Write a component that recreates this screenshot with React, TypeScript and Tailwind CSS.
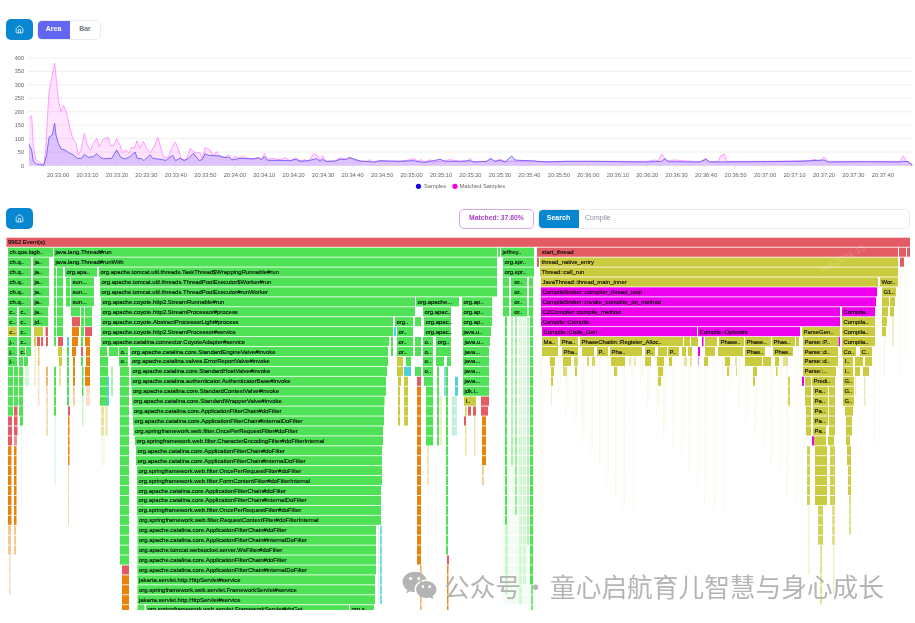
import React from 'react';
import { House } from 'lucide-react';
import { RiWechatFill } from 'react-icons/ri';

const COLORS: Record<string, string> = {
  G: '#4fe256',
  R: '#e35c64',
  O: '#cbcb3f',
  M: '#ee00ee',
  A: '#e8830c',
  C: '#50d0da',
};

// row, x start, x end, colour, label
type Frame = [number, number, number, string, string?];
// x, width, first row, last row, colour, opacity
type Strip = [number, number, number, number, string, number?];

const frames: Frame[] = [
  [0, 6.5, 910, 'R', '9962 Event(s)'],
  [1, 8, 53, 'G', 'ch.qos.logb..'],
  [1, 54, 497, 'G', 'java.lang.Thread#run'],
  [1, 498, 500, 'G'],
  [1, 501, 534, 'G', 'jeffrey..'],
  [1, 537, 898, 'R', '  start_thread'],
  [1, 899, 906, 'R'],
  [1, 907, 910, 'R'],
  [2, 8, 31, 'G', 'ch.q..'],
  [2, 33, 49, 'G', 'ja..'],
  [2, 54, 497, 'G', 'java.lang.Thread#runWith'],
  [2, 503, 534, 'G', 'org.spr..'],
  [2, 537, 539, 'R'],
  [2, 540, 898, 'O', 'thread_native_entry'],
  [2, 900, 904, 'R'],
  [3, 8, 31, 'G', 'ch.q..'],
  [3, 33, 49, 'G', 'ja..'],
  [3, 54, 56, 'G'],
  [3, 57, 63, 'G'],
  [3, 65, 97, 'G', 'org.apa..'],
  [3, 99, 497, 'G', 'org.apache.tomcat.util.threads.TaskThread$WrappingRunnable#run'],
  [3, 503, 534, 'G', 'org.spr..'],
  [3, 540, 898, 'O', 'Thread::call_run'],
  [4, 8, 31, 'G', 'ch.q..'],
  [4, 33, 49, 'G', 'ja..'],
  [4, 54, 56, 'G'],
  [4, 57, 63, 'G'],
  [4, 66, 70, 'G'],
  [4, 71, 94, 'G', 'sun...'],
  [4, 100, 497, 'G', 'org.apache.tomcat.util.threads.ThreadPoolExecutor$Worker#run'],
  [4, 503, 509, 'G'],
  [4, 511, 527, 'G', ' or..'],
  [4, 529, 533, 'G'],
  [4, 541, 878, 'O', 'JavaThread::thread_main_inner'],
  [4, 880, 898, 'O', 'Wor..'],
  [5, 8, 31, 'G', 'ch.q..'],
  [5, 33, 49, 'G', 'ja..'],
  [5, 54, 56, 'G'],
  [5, 57, 63, 'G'],
  [5, 66, 70, 'G'],
  [5, 71, 94, 'G', 'sun...'],
  [5, 100, 497, 'G', 'org.apache.tomcat.util.threads.ThreadPoolExecutor#runWorker'],
  [5, 503, 509, 'G'],
  [5, 511, 527, 'G', ' or..'],
  [5, 529, 533, 'G'],
  [5, 541, 877, 'M', 'CompileBroker::compiler_thread_loop'],
  [5, 882, 896, 'O', 'G1..'],
  [6, 8, 31, 'G', 'ch.q..'],
  [6, 33, 49, 'G', 'ja..'],
  [6, 54, 56, 'G'],
  [6, 57, 63, 'G'],
  [6, 66, 70, 'G'],
  [6, 71, 94, 'G', 'sun...'],
  [6, 101, 415, 'G', 'org.apache.coyote.http2.StreamRunnable#run'],
  [6, 416, 459, 'G', 'org.apache...'],
  [6, 462, 492, 'G', 'org.ap..'],
  [6, 503, 509, 'G'],
  [6, 511, 527, 'G', ' or..'],
  [6, 529, 533, 'G'],
  [6, 541, 876, 'M', 'CompileBroker::invoke_compiler_on_method'],
  [6, 882, 889, 'O'],
  [6, 890, 895, 'O'],
  [7, 8, 17, 'G', 'c..'],
  [7, 19, 31, 'G', 'c..'],
  [7, 33, 48, 'G', 'ja..'],
  [7, 54, 56, 'G'],
  [7, 57, 63, 'G'],
  [7, 71, 80, 'G'],
  [7, 81, 84, 'G'],
  [7, 85, 92, 'G'],
  [7, 101, 415, 'G', 'org.apache.coyote.http2.StreamProcessor#process'],
  [7, 423, 451, 'G', 'org.apac..'],
  [7, 462, 492, 'G', 'org.ap..'],
  [7, 503, 509, 'G'],
  [7, 511, 527, 'G', ' or..'],
  [7, 529, 533, 'G'],
  [7, 541, 840, 'M', 'C2Compiler::compile_method'],
  [7, 842, 875, 'M', 'Compila..'],
  [7, 882, 888, 'O'],
  [7, 890, 894, 'O'],
  [8, 8, 17, 'G', 'c..'],
  [8, 19, 31, 'G', 'c..'],
  [8, 33, 48, 'G', 'jd..'],
  [8, 54, 56, 'G'],
  [8, 57, 63, 'G'],
  [8, 72, 80, 'R'],
  [8, 81, 84, 'G'],
  [8, 85, 92, 'G'],
  [8, 101, 393, 'G', 'org.apache.coyote.AbstractProcessorLight#process'],
  [8, 395, 413, 'G', 'org..'],
  [8, 415, 421, 'G'],
  [8, 424, 451, 'G', 'org.apac..'],
  [8, 462, 492, 'G', 'org.ap..'],
  [8, 541, 840, 'M', 'Compile::Compile'],
  [8, 842, 875, 'O', 'Compila..'],
  [8, 882, 887, 'O'],
  [9, 8, 17, 'O', 'c..'],
  [9, 19, 31, 'G', 'c..'],
  [9, 34, 43, 'O'],
  [9, 45.5, 48, 'R'],
  [9, 54, 56, 'G'],
  [9, 57, 63, 'G'],
  [9, 72, 79, 'A'],
  [9, 81, 84, 'G'],
  [9, 85, 92, 'R'],
  [9, 101, 393, 'G', 'org.apache.coyote.http2.StreamProcessor#service'],
  [9, 394, 396, 'C'],
  [9, 397, 413, 'G', 'or..'],
  [9, 424, 451, 'G', 'org.apac..'],
  [9, 462, 491, 'G', 'java.u..'],
  [9, 542, 697, 'M', 'Compile::Code_Gen'],
  [9, 698, 800, 'M', 'Compile::Optimize'],
  [9, 802, 840, 'O', 'ParseGen..'],
  [9, 842, 875, 'O', 'Compila..'],
  [9, 882, 886, 'O'],
  [10, 8, 17, 'G', 'j..'],
  [10, 19, 31, 'G', 'c..'],
  [10, 34, 36, 'O'],
  [10, 37, 40, 'R'],
  [10, 41, 43, 'R'],
  [10, 46, 48, 'R'],
  [10, 54, 56, 'G'],
  [10, 58, 63, 'R'],
  [10, 67, 69, 'C'],
  [10, 72, 78, 'A'],
  [10, 81, 83, 'G'],
  [10, 85, 90, 'A'],
  [10, 101, 389, 'G', 'org.apache.catalina.connector.CoyoteAdapter#service'],
  [10, 391, 393, 'G'],
  [10, 397, 413, 'G', 'or..'],
  [10, 415, 421, 'G'],
  [10, 423, 433, 'G', 'o..'],
  [10, 436, 451, 'G', 'org..'],
  [10, 463, 490, 'G', 'java.u..'],
  [10, 542, 558, 'O', 'Ma..'],
  [10, 560, 578, 'O', 'Pha..'],
  [10, 580, 683, 'O', 'PhaseChaitin::Register_Alloc..'],
  [10, 684, 690, 'O'],
  [10, 691, 698, 'O'],
  [10, 702, 703.5, 'M'],
  [10, 705, 717, 'O'],
  [10, 719, 744, 'O', 'Phase..'],
  [10, 745, 771, 'O', 'Phase..'],
  [10, 772, 795, 'O', 'Phas..'],
  [10, 796, 799, 'O'],
  [10, 803, 838, 'O', 'Parse::P..'],
  [10, 838.5, 840, 'M'],
  [10, 842, 875, 'O', 'Compila..'],
  [11, 8, 17, 'G', 'j..'],
  [11, 19, 25, 'G', 'c..'],
  [11, 26, 31, 'G'],
  [11, 58, 62, 'O'],
  [11, 67, 69, 'G'],
  [11, 72, 76, 'A'],
  [11, 81, 83, 'R'],
  [11, 86, 90, 'A'],
  [11, 100, 107, 'G'],
  [11, 109, 118, 'G'],
  [11, 119, 128, 'G', 'o..'],
  [11, 391, 393, 'G'],
  [11, 397, 413, 'G', 'or..'],
  [11, 415, 421, 'G'],
  [11, 423, 433, 'G', 'o..'],
  [11, 436, 451, 'G'],
  [11, 463, 489, 'G', 'java...'],
  [11, 542, 549, 'O'],
  [11, 549, 558, 'O'],
  [11, 562, 578, 'O', 'Pha..'],
  [11, 582, 594, 'O'],
  [11, 597, 608, 'O', 'P..'],
  [11, 610, 642, 'O', 'Pha..'],
  [11, 645, 655, 'O', 'P..'],
  [11, 658, 667, 'O'],
  [11, 668, 679, 'O', 'P..'],
  [11, 682, 686, 'O'],
  [11, 688, 692, 'O'],
  [11, 698, 700, 'M'],
  [11, 705, 715, 'O'],
  [11, 718, 743, 'O'],
  [11, 745, 765, 'O', 'Phas..'],
  [11, 773, 793, 'O', 'Phas..'],
  [11, 803, 838, 'O', 'Parse::d..'],
  [11, 842, 856, 'O', 'Co..'],
  [11, 860, 872, 'O', 'C..'],
  [12, 8, 17, 'G', 'j..'],
  [12, 19, 23, 'G'],
  [12, 24, 28, 'G'],
  [12, 59, 62, 'O'],
  [12, 67, 69, 'G'],
  [12, 73, 75, 'A'],
  [12, 81, 83, 'G'],
  [12, 86, 90, 'A'],
  [12, 100, 108, 'G'],
  [12, 119, 128, 'G', 'o..'],
  [12, 397, 403, 'O'],
  [12, 406, 411, 'G'],
  [12, 423, 433, 'G', 'o..'],
  [12, 436, 444, 'G'],
  [12, 447, 451, 'G'],
  [12, 463, 489, 'G', 'java...'],
  [12, 803, 838, 'O', 'Parse::d..'],
  [12, 843, 853, 'O', 'I..'],
  [12, 855, 863, 'O'],
  [12, 865, 872, 'O'],
  [13, 397, 403, 'O'],
  [13, 404, 411, 'C'],
  [13, 415, 421, 'G'],
  [13, 423, 433, 'G', 'o..'],
  [13, 463, 489, 'G', 'java...'],
  [13, 803, 836, 'O', 'Parse::..'],
  [13, 843, 853, 'O', 'I..'],
  [13, 855, 860, 'O'],
  [13, 863, 869, 'O'],
  [14, 398, 401, 'O'],
  [14, 404, 408, 'O'],
  [14, 417, 421, 'R'],
  [14, 424, 433, 'G'],
  [14, 463, 489, 'G', 'java...'],
  [14, 802, 804, 'M'],
  [14, 805, 811, 'O'],
  [14, 812, 835, 'O', 'Predi..'],
  [14, 843, 854, 'O', 'G..'],
  [15, 463, 489, 'G', 'jdk.i..'],
  [15, 805, 811, 'O'],
  [15, 813, 828, 'O', 'Pa..'],
  [15, 829, 835, 'O'],
  [15, 843, 854, 'O', 'G..'],
  [16, 464, 476, 'O', 'I..'],
  [16, 481, 489, 'R'],
  [16, 805, 811, 'O'],
  [16, 813, 828, 'O', 'Pa..'],
  [16, 829, 835, 'O'],
  [16, 843, 854, 'O', 'G..'],
  [17, 468, 471, 'R'],
  [17, 473, 476, 'R'],
  [17, 481, 488, 'R'],
  [17, 806, 811, 'O'],
  [17, 813, 828, 'O', 'Pa..'],
  [17, 829, 835, 'O'],
  [17, 845, 853, 'O'],
  [18, 464, 466, 'R'],
  [18, 806, 811, 'O'],
  [18, 813, 828, 'O', 'Pa..'],
  [18, 829, 835, 'O'],
  [18, 846, 852, 'O'],
  [19, 806, 811, 'O'],
  [19, 813, 826, 'O', 'Pa..'],
  [19, 829, 835, 'O'],
  [19, 846, 852, 'O'],
  [20, 812, 814, 'M'],
  [20, 814, 826, 'O'],
  [20, 828, 834, 'O'],
  [20, 846, 850, 'O'],
];

// the long servlet stack: label, left, right
const stack: [number, string, number, number][] = [
  [11, 'org.apache.catalina.core.StandardEngineValve#invoke', 130, 388],
  [12, 'org.apache.catalina.valves.ErrorReportValve#invoke', 130.5, 388],
  [13, 'org.apache.catalina.core.StandardHostValve#invoke', 131, 387],
  [14, 'org.apache.catalina.authenticator.AuthenticatorBase#invoke', 131, 386],
  [15, 'org.apache.catalina.core.StandardContextValve#invoke', 131.5, 386],
  [16, 'org.apache.catalina.core.StandardWrapperValve#invoke', 132, 384.5],
  [17, 'org.apache.catalina.core.ApplicationFilterChain#doFilter', 132.5, 384],
  [18, 'org.apache.catalina.core.ApplicationFilterChain#internalDoFilter', 133, 384],
  [19, 'org.springframework.web.filter.OncePerRequestFilter#doFilter', 133.5, 383],
  [20, 'org.springframework.web.filter.CharacterEncodingFilter#doFilterInternal', 135, 383],
  [21, 'org.apache.catalina.core.ApplicationFilterChain#doFilter', 136, 382],
  [22, 'org.apache.catalina.core.ApplicationFilterChain#internalDoFilter', 136, 382],
  [23, 'org.springframework.web.filter.OncePerRequestFilter#doFilter', 137, 382],
  [24, 'org.springframework.web.filter.FormContentFilter#doFilterInternal', 137, 382],
  [25, 'org.apache.catalina.core.ApplicationFilterChain#doFilter', 137, 381],
  [26, 'org.apache.catalina.core.ApplicationFilterChain#internalDoFilter', 137, 381],
  [27, 'org.springframework.web.filter.OncePerRequestFilter#doFilter', 137, 381],
  [28, 'org.springframework.web.filter.RequestContextFilter#doFilterInternal', 137.5, 381],
  [29, 'org.apache.catalina.core.ApplicationFilterChain#doFilter', 137.5, 376],
  [30, 'org.apache.catalina.core.ApplicationFilterChain#internalDoFilter', 137.5, 376],
  [31, 'org.apache.tomcat.websocket.server.WsFilter#doFilter', 137.5, 376],
  [32, 'org.apache.catalina.core.ApplicationFilterChain#doFilter', 137.5, 376],
  [33, 'org.apache.catalina.core.ApplicationFilterChain#internalDoFilter', 137.5, 376],
  [34, 'jakarta.servlet.http.HttpServlet#service', 137.5, 375],
  [35, 'org.springframework.web.servlet.FrameworkServlet#service', 137.5, 375],
  [36, 'jakarta.servlet.http.HttpServlet#service', 137.5, 375],
];

// faint hairlines that trail off below the compiler frames
const hairlines: Strip[] = Array.from({ length: 64 }, (_, i) => {
  const x = 540 + ((i * 41) % 262);
  const depth = 13 + ((i * 7) % 15);
  return [x, i % 3 === 0 ? 1.4 : 0.9, 12, depth, 'O', 0.12] as Strip;
});

const strips: Strip[] = [
  ...hairlines,
  // far left columns
  [8, 5, 13, 17, 'G'],
  [14, 4, 13, 16, 'G'],
  [19, 4, 13, 17, 'G'],
  [25, 4, 13, 14, 'G', 0.25],
  [8, 4, 18, 20, 'R'],
  [14, 3.5, 17, 19, 'R'],
  [20, 3, 17, 18, 'G'],
  [14, 3, 20, 20, 'R', 0.7],
  [8, 3.5, 21, 28, 'A'],
  [14, 2.5, 21, 28, 'A'],
  [8, 3, 29, 31, 'A', 0.45],
  [14, 2, 29, 31, 'A', 0.45],
  [9, 1.5, 32, 35, 'A', 0.3],
  [21, 1, 19, 26, 'C', 0.12],
  // second group of short stacks
  [34, 2, 11, 14, 'O', 0.25],
  [38, 1.5, 11, 12, 'A', 0.5],
  [38, 1.5, 13, 16, 'A', 0.25],
  [46, 2, 13, 14, 'A', 0.6],
  [46, 2, 15, 19, 'A', 0.3],
  [54, 2, 13, 17, 'G'],
  [54, 2, 18, 24, 'G', 0.15],
  [59, 2, 13, 14, 'O', 0.5],
  [67, 2, 13, 16, 'G'],
  [68, 2, 17, 17, 'R'],
  [68, 1.5, 18, 22, 'A'],
  [68, 1, 23, 28, 'A', 0.35],
  [73, 2, 13, 14, 'A'],
  [73, 2, 15, 16, 'A', 0.4],
  [82, 1.5, 13, 15, 'G'],
  [82, 1.5, 16, 18, 'G', 0.3],
  [85, 5, 13, 14, 'A'],
  [86, 4, 15, 16, 'A', 0.25],
  [100, 8, 13, 16, 'G'],
  [107, 2, 14, 16, 'C'],
  [101, 3, 17, 19, 'O', 0.5],
  [105, 3, 17, 19, 'O', 0.35],
  [101, 4, 20, 22, 'O', 0.12],
  [111, 2, 13, 15, 'G', 0.5],
  [120, 9, 13, 32, 'G'],
  [122, 7, 33, 33, 'R'],
  [122, 7, 34, 37, 'A'],
  // between the servlet stack and the java.* column
  [398, 2, 15, 18, 'O'],
  [404, 4, 15, 18, 'O'],
  [417, 4, 15, 32, 'A'],
  [420, 1.5, 33, 37, 'A', 0.4],
  [426, 7, 15, 20, 'G'],
  [427, 2, 21, 24, 'O', 0.4],
  [437, 2, 13, 20, 'G'],
  [444, 3, 13, 15, 'C', 0.7],
  [440, 2, 16, 20, 'O', 0.3],
  [446, 2, 13, 31, 'G'],
  [447, 2, 32, 32, 'R'],
  [447, 1.5, 33, 37, 'A', 0.9],
  [455, 3, 14, 15, 'C'],
  [454, 3, 16, 19, 'C', 0.35],
  [452, 2, 16, 19, 'G', 0.4],
  [465, 1.5, 17, 17, 'O'],
  [465, 1.5, 19, 21, 'O', 0.5],
  [474, 1.5, 18, 21, 'O', 0.4],
  [482, 4, 18, 22, 'A'],
  [482, 2, 23, 24, 'A', 0.4],
  [420, 2, 33, 37, 'A', 0.25],
  [380, 2, 29, 36, 'C', 0.75],
  [378, 1, 29, 36, 'C', 0.2],
  // green column right of java.*
  [503, 30, 20, 36, 'G', 0.07],
  [505, 2, 7, 28, 'G'],
  [505, 3, 29, 35, 'G', 0.25],
  [511, 2, 7, 22, 'G', 0.45],
  [515, 2, 7, 27, 'G', 0.55],
  [519, 3, 7, 36, 'G', 0.2],
  [523, 3, 7, 34, 'G', 0.2],
  [527, 2, 7, 30, 'G', 0.4],
  [530, 3, 7, 34, 'G'],
  [531, 2, 35, 37, 'G', 0.8],
  // olive tails under the compiler frames
  [550, 5, 12, 12, 'O'],
  [563, 8, 12, 12, 'O'],
  [574, 4, 12, 12, 'O', 0.8],
  [587, 2, 12, 12, 'O', 0.8],
  [592, 3, 12, 12, 'O', 0.8],
  [611, 14, 12, 12, 'O'],
  [629, 2, 12, 12, 'O', 0.4],
  [634, 2, 12, 12, 'O', 0.4],
  [645, 6, 12, 12, 'O'],
  [657, 7, 12, 12, 'O'],
  [669, 3, 12, 12, 'O'],
  [684, 3, 12, 12, 'O', 0.5],
  [690, 2, 12, 12, 'O', 0.5],
  [698, 1, 12, 12, 'M', 0.4],
  [704, 4, 12, 12, 'O'],
  [725, 5, 12, 12, 'O'],
  [735, 2, 12, 12, 'O', 0.5],
  [745, 17, 12, 12, 'O'],
  [763, 8, 12, 12, 'O'],
  [775, 4, 12, 12, 'O'],
  [783, 5, 12, 12, 'O', 0.6],
  [551, 3, 13, 13, 'O'],
  [563, 4, 13, 13, 'O', 0.7],
  [575, 2, 13, 13, 'O'],
  [614, 3, 13, 13, 'O'],
  [658, 5, 13, 13, 'O'],
  [727, 2, 13, 13, 'O'],
  [736, 1, 13, 13, 'O', 0.7],
  [753, 4, 13, 13, 'O'],
  [776, 1.5, 13, 13, 'O'],
  [551, 2, 14, 14, 'O'],
  [658, 3, 14, 14, 'O'],
  [753, 2, 14, 14, 'O'],
  [788, 2, 14, 16, 'O', 0.85],
  [551, 1, 15, 16, 'O', 0.3],
  [855, 1, 14, 15, 'O', 0.4],
  [864, 1.5, 14, 16, 'O', 0.4],
  // parser column tails
  [807, 3, 21, 26, 'O', 0.9],
  [808, 2, 27, 33, 'O', 0.2],
  [815, 12, 21, 26, 'O'],
  [818, 5, 27, 30, 'O', 0.85],
  [820, 2, 31, 36, 'O', 0.55],
  [830, 5, 21, 26, 'O', 0.9],
  [832, 3, 27, 30, 'O', 0.6],
  [833, 1.5, 31, 35, 'O', 0.3],
  [847, 4, 21, 22, 'O'],
  [848, 3, 23, 25, 'O', 0.95],
  [849, 2, 26, 29, 'O', 0.6],
  [874, 1, 11, 20, 'O', 0.1],
  [884, 2, 8, 9, 'O', 0.5],
  [884, 1, 10, 13, 'O', 0.2],
  [892, 2, 7, 10, 'O', 0.3],
  [900, 1, 3, 13, 'O', 0.12],
  [905, 1, 3, 11, 'O', 0.1],
];

const pinkPts = [
  [87, 355], [95, 347], [100, 440], [108, 480], [120, 488], [131, 495], [137, 450], [147, 275], [155, 235], [164, 190],
  [168, 230], [175, 300], [183, 335], [191, 316], [200, 340], [210, 385], [218, 415], [228, 430], [235, 465], [243, 450],
  [253, 400], [262, 435], [271, 452], [280, 430], [290, 415], [298, 440], [310, 418], [325, 412], [332, 438], [342, 435],
  [350, 416], [360, 435], [367, 458], [378, 450], [387, 460], [395, 442], [403, 445], [411, 422], [419, 445], [430, 424],
  [440, 445], [452, 458], [462, 440], [474, 412], [484, 450], [491, 472], [505, 472], [515, 445], [526, 426], [534, 445],
  [545, 480], [560, 478], [570, 445], [585, 458], [600, 458], [607, 478], [615, 443], [630, 450], [640, 468], [650, 455],
  [660, 470], [675, 472], [686, 464], [695, 478], [705, 468], [715, 474], [730, 470], [745, 475], [760, 476], [775, 472],
  [785, 478], [793, 460], [803, 478], [820, 475], [840, 480], [855, 473], [870, 482], [888, 473], [900, 483], [915, 479],
  [925, 484], [942, 460], [955, 470], [960, 482], [968, 467], [978, 484], [1005, 484], [1020, 473], [1035, 478], [1048, 473],
  [1062, 480], [1080, 484], [1100, 484], [1110, 479], [1120, 487], [1140, 484], [1170, 484], [1200, 484], [1225, 480], [1240, 476],
  [1255, 483], [1262, 479], [1275, 486], [1290, 479], [1300, 486], [1320, 484], [1350, 479], [1380, 484], [1400, 484], [1410, 475],
  [1420, 486], [1460, 484], [1472, 475], [1485, 484], [1500, 478], [1515, 484], [1590, 483], [1600, 480], [1610, 485], [1700, 484],
  [1940, 484], [1965, 480], [1975, 482], [1985, 462], [1998, 482], [2025, 480], [2045, 482], [2100, 485], [2118, 475], [2128, 485],
  [2155, 484], [2162, 468], [2173, 462], [2180, 484], [2300, 484], [2430, 482], [2445, 478], [2458, 484], [2472, 471], [2485, 484],
  [2700, 484], [2710, 467], [2720, 485], [2737, 495],
];

const bluePts = [
  [87, 433], [95, 450], [100, 484], [110, 492], [131, 496], [140, 465], [147, 412], [157, 405], [164, 370], [168, 405],
  [175, 430], [183, 447], [195, 450], [205, 457], [220, 465], [232, 475], [245, 475], [253, 463], [265, 472], [280, 470],
  [290, 461], [300, 472], [310, 476], [335, 475], [350, 450], [362, 472], [375, 477], [390, 470], [405, 456], [412, 475],
  [425, 476], [432, 482], [450, 464], [458, 475], [480, 478], [498, 481], [518, 466], [527, 482], [540, 474], [553, 482],
  [565, 475], [580, 460], [598, 482], [607, 478], [615, 461], [625, 466], [660, 468], [675, 473], [686, 471], [695, 480],
  [720, 475], [760, 477], [775, 474], [785, 478], [793, 470], [803, 481], [840, 481], [870, 482], [888, 478], [900, 484],
  [925, 482], [950, 476], [960, 484], [968, 478], [978, 484], [1005, 483], [1020, 478], [1040, 478], [1048, 472], [1062, 477],
  [1080, 483], [1120, 486], [1140, 482], [1200, 484], [1240, 482], [1255, 485], [1275, 487], [1320, 478], [1335, 484], [1380, 484],
  [1410, 482], [1420, 486], [1460, 484], [1472, 476], [1485, 484], [1500, 481], [1515, 486], [1535, 468], [1545, 480], [1560, 481],
  [1600, 483], [1640, 486], [1700, 484], [1780, 484], [1850, 485], [1940, 486], [1985, 484], [1995, 476], [2005, 485], [2100, 486],
  [2118, 478], [2128, 486], [2300, 485], [2400, 484], [2472, 480], [2485, 486], [2600, 485], [2700, 486], [2710, 484], [2725, 485],
  [2737, 495],
];

const toLine = (pts: number[][]) => pts.map(([x, y]) => `${x / 3},${y / 3}`).join(' ');
const toArea = (pts: number[][]) => `${pts[0][0] / 3},165.5 ${toLine(pts)} ${pts[pts.length - 1][0] / 3},165.5`;

const ticks = Array.from({ length: 29 }, (_, i) => {
  const total = 33 * 60 + i * 10;
  const m = Math.floor(total / 60);
  const s = total % 60;
  return { x: 58 + i * 29.46, label: `20:${m}:${s === 0 ? '00' : s}` };
});

const yAxis = [400, 350, 300, 250, 200, 150, 100, 50, 0];
const rowY = (r: number) => 236.7 + r * 9.93;
const labelProps = { fontSize: 5.95, fill: '#050505', stroke: '#050505', strokeWidth: 0.12 };

const HomeButton = () => (
  <button className="w-[27px] h-[21px] bg-[#0787d0] rounded-[5px] flex items-center justify-center text-white">
    <House size={9} strokeWidth={2} />
  </button>
);

const AreaChart = () => (
  <svg className="block w-[915px] h-[148px] mt-[10px]" viewBox="0 50 915 148">
    {yAxis.map((v, i) => {
      const y = 58 + i * 13.44;
      return (
        <g key={v}>
          <line x1="28" x2="912" y1={y} y2={y} stroke="#efefef" strokeWidth="1" />
          <text x="24" y={y + 2} textAnchor="end" fontSize="5.6" fill="#666">{v}</text>
        </g>
      );
    })}
    <polygon points={toArea(pinkPts)} fill="#ff40ff" fillOpacity="0.15" />
    <polyline points={toLine(pinkPts)} fill="none" stroke="#ff8cff" strokeWidth="0.85" />
    <polygon points={toArea(bluePts)} fill="#5a3cff" fillOpacity="0.2" />
    <polyline points={toLine(bluePts)} fill="none" stroke="#6b5cff" strokeWidth="0.9" />
    {ticks.map((t) => (
      <g key={t.label}>
        <line x1={t.x} x2={t.x} y1="166" y2="168" stroke="#e4e4e4" strokeWidth="0.7" />
        <text x={t.x} y="177" textAnchor="middle" fontSize="5.7" fill="#666">{t.label}</text>
      </g>
    ))}
    <circle cx="418.5" cy="186.3" r="2.6" fill="#1a00f0" />
    <text x="424" y="188.3" fontSize="5.7" fill="#666">Samples</text>
    <circle cx="455" cy="186.3" r="2.6" fill="#f000e0" />
    <text x="459.5" y="188.3" fontSize="5.7" fill="#666">Matched Samples</text>
  </svg>
);

const FlameGraph = () => (
  <svg className="block w-[915px] h-[373px] mt-[8px]" viewBox="0 236 915 373">
    {strips.map(([x, w, r0, r1, c, op], i) => (
      <g key={i} fillOpacity={op ?? 1}>
        {Array.from({ length: r1 - r0 + 1 }, (_, k) => (
          <rect key={k} x={x} y={rowY(r0 + k)} width={w} height={9.1} fill={COLORS[c]} />
        ))}
      </g>
    ))}
    {stack.map(([row, label, x1, x2]) => (
      <g key={row}>
        <rect x={x1} y={rowY(row)} width={x2 - x1} height={9.1} fill={COLORS.G} />
        <text x={x1 + 1.5} y={rowY(row) + 6.6} {...labelProps}>{label}</text>
      </g>
    ))}
    <rect x={137.5} y={rowY(37)} width={7} height={6} fill={COLORS.G} />
    <rect x={146} y={rowY(37)} width={203} height={6} fill={COLORS.G} />
    <rect x={350} y={rowY(37)} width={24} height={6} fill={COLORS.G} />
    <text x={147.5} y={rowY(37) + 5.8} {...labelProps}>org.springframework.web.servlet.FrameworkServlet#doGet</text>
    <text x={351.5} y={rowY(37) + 5.8} {...labelProps}>org.s..</text>
    {frames.map(([row, x1, x2, c, label], i) => (
      <g key={i}>
        <rect x={x1} y={rowY(row)} width={x2 - x1} height={9.1} fill={COLORS[c]} />
        {label && (
          <text x={x1 + 1.5} y={rowY(row) + 6.6} xmlSpace="preserve" {...labelProps}>{label}</text>
        )}
      </g>
    ))}
    <text x="822" y="272" fontSize="9" fill="#ffffff" fillOpacity="0.22" transform="rotate(-28 822 272)">Hal-2024-15</text>
  </svg>
);

export default function App() {
  return (
    <div className="relative w-[915px] h-[623px] overflow-hidden bg-white blur-[0.3px] font-['Liberation_Sans',Arial,sans-serif]">
      <div className="flex items-center gap-1 pl-[6px] pt-[19px]">
        <HomeButton />
        <div className="flex h-5 rounded-[5px] border border-[#ececf0] overflow-hidden text-[7px] font-bold">
          <span className="w-[33px] -ml-px -my-px bg-[#6366f1] text-white flex items-center justify-center rounded-l-[5px]">Area</span>
          <span className="w-[30px] bg-white text-[#6b7280] flex items-center justify-center">Bar</span>
        </div>
      </div>

      <AreaChart />

      <div className="flex items-center justify-between pl-[6px] pr-[5px] mt-[10px]">
        <HomeButton />
        <div className="flex items-center gap-1">
          <div className="w-[75px] h-[20px] rounded-[5px] border border-[#d8a8e6] text-[#a63fc4] text-[6.8px] font-bold flex items-center justify-center">
            Matched: 37.60%
          </div>
          <div className="flex w-[372px] h-[20px] rounded-[5px] border border-[#ececf0] overflow-hidden">
            <span className="w-[41px] -ml-px -my-px bg-[#0787d0] text-white text-[7px] font-bold flex items-center justify-center">Search</span>
            <span className="flex-1 pl-[6px] text-[#8a8f99] text-[7px] flex items-center">Compile</span>
          </div>
        </div>
      </div>

      <FlameGraph />

      {/* wechat watermark sits over the flame graph */}
      <div className="absolute left-[401px] top-[567px] flex items-center text-[#b4b4b4] font-['Noto_Sans_CJK_SC',sans-serif] text-[25.7px] leading-[36px] whitespace-nowrap">
        <RiWechatFill size={37} />
        <span className="ml-[6px]">公众号</span>
        <span className="w-[29px] text-center">·</span>
        <span>童心启航育儿智慧与身心成长</span>
      </div>
    </div>
  );
}
